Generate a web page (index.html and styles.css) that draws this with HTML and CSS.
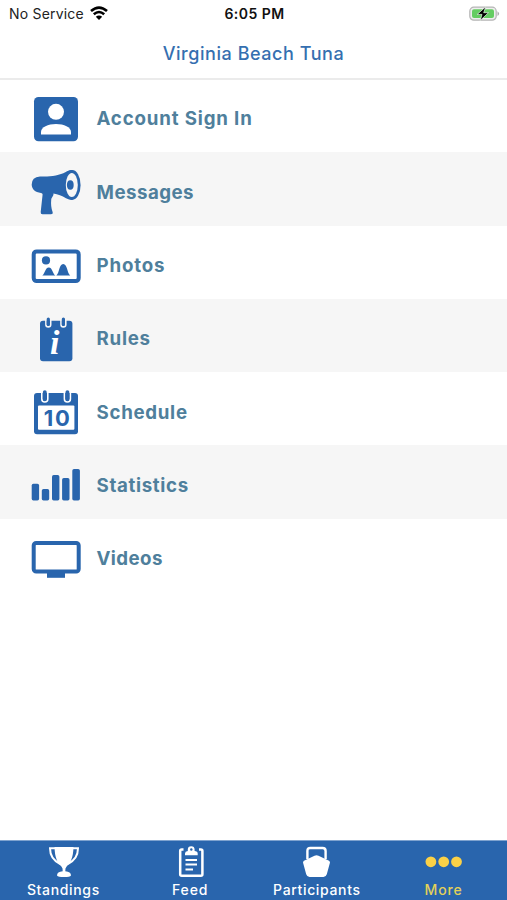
FILE: index.html
```html
<!DOCTYPE html>
<html lang="en">
<head>
<meta charset="utf-8">
<title>Virginia Beach Tuna</title>
<link rel="stylesheet" href="styles.css">
</head>
<body>
<div class="app">
  <div class="status">
    <div class="carrier"><span>No Service</span>
      <svg width="18" height="14" viewBox="0 0 18 14" fill="none" stroke="#000" stroke-width="2.6"><path d="M1 5.1Q9-1.9 17 5.1M3.8 8.2Q9 3.8 14.2 8.2"/><path d="M9 14L5.8 10.7Q9 8.2 12.2 10.7Z" fill="#000" stroke="none"/></svg>
    </div>
    <div class="time">6:05 PM</div>
    <svg class="battery" width="31" height="16" viewBox="0 0 31 16"><rect x=".8" y="1.2" width="26.4" height="13" rx="4" fill="#eee" stroke="#b5b5b5" stroke-width="1.2"/><rect x="3" y="3.3" width="22" height="8.8" rx="2" fill="#65cd62"/><path d="M28.5 5.3Q31.7 7.7 28.5 10Z" fill="#aaa"/><path d="M16.8.7L8.2 8.4H13L11.2 14.5L19.5 6.7H14.7Z" fill="#000" stroke="#e8f5e8" stroke-width=".7"/></svg>
  </div>
  <header class="title"><span>Virginia Beach Tuna</span></header>
  <nav class="menu">
    <a class="row"><svg class="icon" viewBox="0 0 52 52"><rect x="4" y="4" width="44" height="44.3" rx="4.5"/><g class="paper"><circle cx="26" cy="18.8" r="8"/><path d="M11 41.5V39C11 34 18 31 26 31S41 34 41 39V41.5Z"/></g></svg><span class="account">Account Sign In</span></a>
    <a class="row"><svg class="icon" viewBox="0 0 52 52"><path d="M10 10.4H17C25 10.4 33 8 37 5.3Q39.4 4 42.2 4V34Q39 34 36 32.2C32 29.8 28 28.4 23.4 27.6C24 30 21.5 31 21.2 34C20.8 38 21.2 42 22.6 46Q23.2 48.2 21 48.2H12.5Q10.4 48.2 10.7 46L12.6 28.5Q12.6 27.2 11 27C5 26.6 1.7 23 1.7 18.6Q1.7 10.8 10 10.4Z"/><ellipse cx="42.2" cy="19" rx="8.4" ry="15"/><ellipse class="paper" cx="41.8" cy="19" rx="6" ry="12"/><ellipse cx="40.3" cy="19" rx="3.4" ry="4.7"/></svg><span class="messages">Messages</span></a>
    <a class="row"><svg class="icon" viewBox="0 0 52 52"><rect class="frame" x="3.7" y="11.4" width="45" height="29.7" rx="3"/><circle cx="16" cy="20.4" r="4.1"/><path d="M12.3 35.5C15 34 15 27.5 18.8 27.5S22.5 34 25.4 35.5ZM26.3 35.5C29.5 33 29 24 33.2 24S37 33 40.2 35.5Z"/></svg><span class="photos">Photos</span></a>
    <a class="row"><svg class="icon" viewBox="0 0 52 52"><rect x="10" y="7.7" width="32.4" height="40.5" rx="3"/><g class="holes"><path d="M15.9 6V11.5a2.4 2.4 0 0 0 4.8 0V6M31 6V11.5a2.4 2.4 0 0 0 4.8 0V6"/></g><rect x="16.7" y="4.4" width="3.2" height="8.4" rx="1.6"/><rect x="31.8" y="4.4" width="3.2" height="8.4" rx="1.6"/><text class="info" x="20" y="41">i</text></svg><span class="rules">Rules</span></a>
    <a class="row"><svg class="icon" viewBox="0 0 52 52"><rect x="4" y="7" width="44" height="41.3" rx="3"/><rect class="paper" x="8" y="19.4" width="36.4" height="24.4" rx="1"/><g class="holes"><path d="M11.8 6V13a3 3 0 0 0 6 0V6M34.4 6V13a3 3 0 0 0 6 0V6"/></g><rect x="12.9" y="4.2" width="3.8" height="10.5" rx="1.9"/><rect x="35.5" y="4.2" width="3.8" height="10.5" rx="1.9"/><text class="day" x="13.8" y="39.7" textLength="26">10</text></svg><span class="schedule">Schedule</span></a>
    <a class="row"><svg class="icon" viewBox="0 0 52 52"><rect x="1.7" y="24.7" width="7.4" height="16.7" rx="1.7"/><rect x="11.8" y="30" width="7.4" height="11.4" rx="1.7"/><rect x="22" y="16" width="7.4" height="25.4" rx="1.7"/><rect x="32.1" y="19" width="7.4" height="22.4" rx="1.7"/><rect x="42.3" y="10" width="7.6" height="31.4" rx="1.7"/></svg><span class="statistics">Statistics</span></a>
    <a class="row"><svg class="icon" viewBox="0 0 52 52"><rect class="frame" x="3.7" y="10" width="45" height="28.5" rx="2.5"/><path d="M17 39H35V44.8H17Z"/></svg><span class="videos">Videos</span></a>
  </nav>
  <nav class="tabs">
    <a class="tab"><svg viewBox="-1 0 32 32"><path d="M6.5 1H25.5C25.2 12 22.5 17 18.6 20.5Q17 22 17.3 25.2Q23 25.6 23 29.5Q22 31 16 31T9 29.5Q9 25.6 14.7 25.2Q15 22 13.4 20.5C9.5 17 6.8 12 6.5 1Z" fill="#fff"/><path d="M8 2.3H2C2 10.5 5.5 14.8 12.2 18M24 2.3H30C30 10.5 26.5 14.8 19.8 18" fill="none" stroke="#fff" stroke-width="2"/></svg><span class="standings">Standings</span></a>
    <a class="tab"><svg viewBox="-1 0 32 32"><rect x="5.2" y="3.6" width="22.2" height="26.2" rx="1.5" fill="none" stroke="#fff" stroke-width="2.5"/><path d="M8.5 1.8H24V9H8.5Z" fill="#2965ad"/><path d="M10 9.2V7.5Q10 5.4 12.8 5V3.6Q12.8.2 16.2.2T19.6 3.6V5Q22.7 5.4 22.7 7.5V9.2Z" fill="#fff"/><circle cx="16.3" cy="3.5" r="1.2" fill="#2965ad"/><path d="M10.5 14H22M10.5 18.5H22M10.5 23.5H18" stroke="#fff" stroke-width="2.2"/></svg><span class="feed">Feed</span></a>
    <a class="tab"><svg viewBox="0 0 32 32"><path d="M6.4 13V5Q6.4 2 9.4 2H21.6Q24.6 2 24.6 5V13" fill="none" stroke="#fff" stroke-width="2.4"/><path d="M2 16.5Q2.2 14.8 4 14.2L13.5 9.7Q15.5 8.8 17.5 9.7L27 14.2Q28.8 14.8 29 16.5L25.8 28.3Q25 31 22.5 31H8.5Q6 31 5.2 28.3Z" fill="#fff"/></svg><span class="participants">Participants</span></a>
    <a class="tab active"><svg viewBox="0 0 40 32" class="dots"><circle cx="6.9" cy="15.8" r="5.4"/><circle cx="19.7" cy="15.8" r="5.4"/><circle cx="32.5" cy="15.8" r="5.4"/></svg><span class="more">More</span></a>
  </nav>
</div>
</body>
</html>
```
FILE: styles.css
```css
* { box-sizing: border-box; }
body { margin: 0; background: #fff; font-family: Inter, sans-serif; }
.app { width: 507px; height: 900px; display: flex; flex-direction: column; overflow: hidden; }
.status { height: 28px; flex: none; padding: 0 7px 0 9px; display: grid; grid-template-columns: 1fr auto 1fr; align-items: center; color: #222; font-size: 14px; }
.carrier { display: flex; align-items: center; gap: 6px; margin-top: -1px; letter-spacing: .2px; }
.carrier svg { margin-top: -1px; }
.time { margin-top: -1px; font-weight: 600; font-size: 14px; color: #111; letter-spacing: .45px; }
.battery { justify-self: end; margin-top: -1px; }
.title { height: 52px; flex: none; display: flex; justify-content: center; align-items: center; border-bottom: 2px solid #ebebeb; color: #356fb0; font-size: 18px; font-weight: 500; letter-spacing: .55px; }
.menu { flex: 1; margin-top: -1px; }
.row { height: 73.3px; padding: 6.6px 0 0 30px; display: flex; align-items: center; gap: 14.5px; color: #4f7f9c; font-size: 18.7px; font-weight: 700; }
.row:nth-child(even) { background: #f6f6f6; --paper: #f6f6f6; }
.icon { width: 52px; height: 52px; fill: #2965ad; }
.account { letter-spacing: .84px; }
.messages { letter-spacing: .48px; }
.photos { letter-spacing: .85px; }
.rules { letter-spacing: .75px; }
.schedule { letter-spacing: .7px; }
.statistics { letter-spacing: .65px; }
.videos { letter-spacing: .4px; }
.paper { fill: var(--paper, #fff); }
.frame { fill: none; stroke: #2965ad; stroke-width: 4; }
.holes { fill: none; stroke: var(--paper, #fff); stroke-width: 1.6; }
.info { fill: #fff; font: italic bold 34px "Liberation Serif", serif; }
.day { font: 700 22px Inter, sans-serif; }
.tabs { height: 60px; flex: none; display: grid; grid-template-columns: repeat(4, 1fr); background: #2965ad; border-top: 1px solid #7fa3cf; }
.tab { display: flex; flex-direction: column; align-items: center; padding-top: 5px; color: #fff; font-size: 14px; font-weight: 500; line-height: 18px; letter-spacing: .65px; }
.tab svg { width: 32px; height: 32px; margin-bottom: 3px; }
.tab .dots { width: 40px; fill: #fbd147; }
.feed, .more { letter-spacing: .9px; }
.active { color: #e3d15a; }
```
